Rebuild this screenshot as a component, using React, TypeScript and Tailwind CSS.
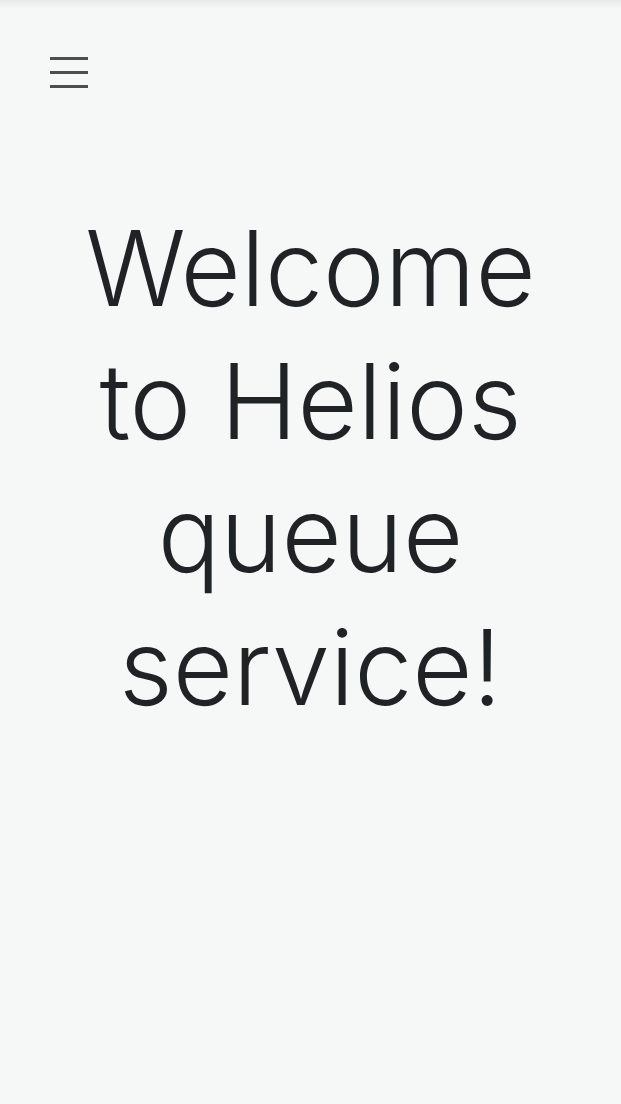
export default function App() {
  return (
    <div className="relative min-h-[1104px] w-full bg-[#f6f8f7]" style={{ fontFamily: 'Inter, "Liberation Sans", sans-serif' }}>
      <div className="absolute left-0 right-0 top-0 h-[8px] bg-gradient-to-b from-[#e8eae9] to-[#f6f8f7]" />
      <div className="px-[50px] pt-[56px]">
        <svg width="38" height="32" viewBox="0 0 38 32" className="block" shapeRendering="crispEdges">
          <rect x="0" y="1" width="38" height="3" fill="#4d4f4e" />
          <rect x="0" y="15" width="38" height="3" fill="#4d4f4e" />
          <rect x="0" y="29" width="38" height="3" fill="#4d4f4e" />
        </svg>
      </div>
      <h1 className="mt-[114px] text-center text-[104px] font-light leading-[133px] text-[#1f2326]">
        Welcome
        <br />
        to Helios
        <br />
        queue
        <br />
        service!
      </h1>
    </div>
  );
}
